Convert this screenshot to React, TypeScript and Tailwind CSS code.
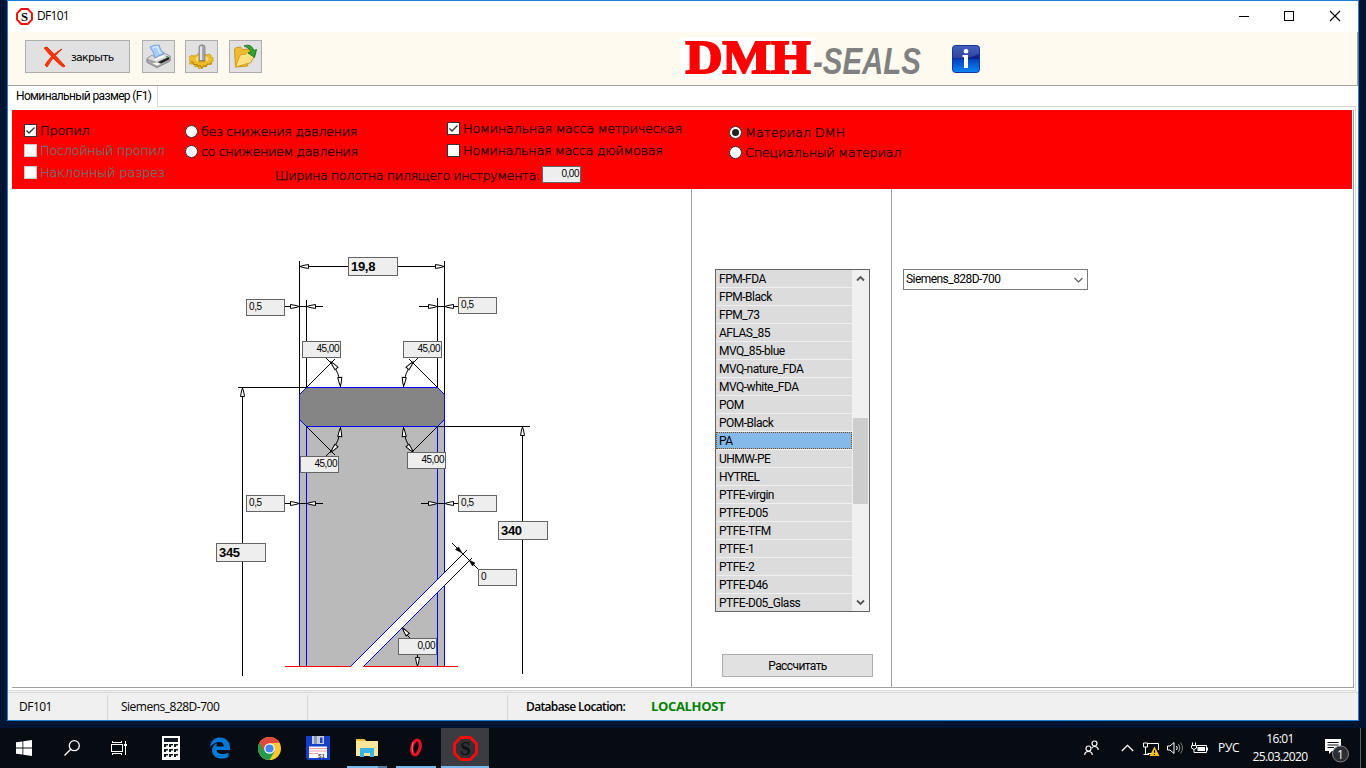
import React from "react";

const MATERIALS = [
  "FPM-FDA", "FPM-Black", "FPM_73", "AFLAS_85", "MVQ_85-blue", "MVQ-nature_FDA", "MVQ-white_FDA",
  "POM", "POM-Black", "PA", "UHMW-PE", "HYTREL", "PTFE-virgin", "PTFE-D05", "PTFE-TFM", "PTFE-1",
  "PTFE-2", "PTFE-D46", "PTFE-D05_Glass",
];

function OctagonS({ size, sFill, inner }: { size: number; sFill: string; inner: string }) {
  return (
    <svg width={size} height={size} viewBox="0 0 24 24">
      <polygon points="7.5,1.5 16.5,1.5 22.5,7.5 22.5,16.5 16.5,22.5 7.5,22.5 1.5,16.5 1.5,7.5" fill={inner} stroke="#f60c0c" strokeWidth="2.8" />
      <text x="12" y="18.2" textAnchor="middle" fontFamily="Liberation Serif, serif" fontWeight="bold" fontSize="18" fill={sFill}>S</text>
    </svg>
  );
}

function TitleBar() {
  return (
    <div className="flex h-[31px] shrink-0 items-center bg-white pl-2">
      <OctagonS size={17} sFill="#000" inner="#fff" />
      <span className="ml-[4px] mt-[-2px] font-['Open_Sans',sans-serif] text-[12px] tracking-[-0.7px] text-black">DF101</span>
      <svg className="ml-auto mr-[17px] -mt-px" width="102" height="12" viewBox="0 0 102 12" fill="none" stroke="#000" shapeRendering="crispEdges">
        <path d="M0 6.5H10" />
        <rect x="45.5" y="1.5" width="9" height="9" />
        <path d="M91 1L101 11M101 1L91 11" shapeRendering="auto" strokeWidth="1.1" />
      </svg>
    </div>
  );
}

function PrinterIcon() {
  return (
    <svg width="25" height="25" viewBox="0 0 25 25">
      <path d="M1 14.500L6 11L9 13L17 10L16 8L24 12V17L11 23.500L1 18Z" fill="#d9d9dc" stroke="#85858a" strokeWidth=".8" />
      <path d="M4 3Q9 .5 13 1Q14 6 18 10Q13 11 9 14Q8 8 4 3Z" fill="#a9cdfa" stroke="#5a92dc" strokeWidth=".8" />
      <path d="M6.500 4Q9 2.500 11.500 2.500Q12 6 14.500 9.500" fill="none" stroke="#dcebff" strokeWidth="1.500" />
      <path d="M1 15L11 19L24 12.500V17L11 23.500L1 18.500Z" fill="#aaaab0" stroke="#77777c" strokeWidth=".6" />
      <path d="M11 18.500L23 13v2.500L12 21Z" fill="#222" />
      <path d="M5 19l6 3 5-2-5-2z" fill="#f5f5f5" stroke="#888" strokeWidth=".5" />
      <path d="M9 16l9-4" stroke="#fff" strokeWidth="1.500" />
      <rect x="20" y="12" width="2" height="1.500" fill="#4ab54a" />
    </svg>
  );
}

function GearIcon() {
  return (
    <svg width="25" height="25" viewBox="0 0 25 25">
      <path d="M2 11.500l4 .5 2-1.500 2-1.500 5 0 2 2 3-1 2 1-.5 2 2.500.5v4l-2.500 1 .5 2-4 0-1 2.500-3-1-1.500 3-2.500 0-1-3-3 1-1.500-3-4 0 1-3-2.500-1v-3l2-.500z" fill="#edbd2c" stroke="#cf9c18" strokeWidth=".8" />
      <path d="M2 17.500l2 1 1 2 3 0 1 2 2-1 2 2.500 2-2.500 2 1 1.500-2.500 3.500 0 .5-1.500" fill="none" stroke="#bb850c" strokeWidth="1.200" />
      <ellipse cx="13" cy="15" rx="6.500" ry="3.500" fill="#fadd70" />
      <ellipse cx="13" cy="17" rx="4" ry="1.500" fill="#cf9c18" />
      <path d="M10 3Q10 .8 13 .8T16 3V16Q13 18 10 16Z" fill="#a5a5aa" stroke="#77777b" strokeWidth=".7" />
      <path d="M12 2.500V16" stroke="#ececf0" strokeWidth="1.800" />
    </svg>
  );
}

function FolderIcon() {
  return (
    <svg width="25" height="25" viewBox="0 0 25 25">
      <path d="M1.500 5l2-1.500 4-.5 2 2.500 7-.5 1 3-3 14L2.500 23Z" fill="#f0bb32" stroke="#c68d10" strokeWidth=".9" />
      <path d="M7 11l6-1 1-1.500 9 0-5 10L2.500 23Z" fill="#fde183" stroke="#d29c1c" strokeWidth=".9" />
      <path d="M11 2Q18-1 21 6.500l2.500-1-2 8-6.500-4.500 3-1Q16 3 11 2Z" fill="#32a436" stroke="#137018" strokeWidth=".8" />
    </svg>
  );
}

const toolBtn = "flex h-[33px] w-[33px] items-center justify-center border border-[#adadad] bg-[#e1e1e1]";

function Toolbar() {
  return (
    <div className="flex h-[54px] shrink-0 items-start border-b border-r border-[#a0a0a0] bg-[#fffaef] pl-[17px]">
      <button className="mt-[8px] flex h-[33px] w-[105px] items-center border border-[#adadad] bg-[#e1e1e1] pl-[17px]">
        <svg width="24" height="24" viewBox="0 0 24 24">
          <path d="M1 3L4 2Q12 10 22 21L20 22Q12 16 1 3Z" fill="#ff3503" stroke="#e92d00" />
          <path d="M19 4Q9 12 4 22L2 20Q8 10 19 4Z" fill="#ff3503" stroke="#e92d00" />
        </svg>
        <span className="ml-[4px] mt-[3px] font-['DejaVu_Sans',sans-serif] text-[11px] tracking-[-0.75px] text-black">закрыть</span>
      </button>
      <button className={`mt-[8px] ml-[12px] ${toolBtn}`}><PrinterIcon /></button>
      <button className={`mt-[8px] ml-[10px] ${toolBtn}`}><GearIcon /></button>
      <button className={`mt-[8px] ml-[11px] ${toolBtn}`}><FolderIcon /></button>
      <svg className="ml-[419px] shrink-0" width="254" height="53" viewBox="681 32 254 53">
        <rect x="681" y="37" width="134" height="42" fill="#fff" />
        <text x="685.500" y="73" fontFamily="Liberation Serif, serif" fontWeight="bold" fontSize="46" textLength="125" lengthAdjust="spacingAndGlyphs" fill="#fe0000" stroke="#fe0000" strokeWidth="2">DMH</text>
        <text x="813" y="74" fontFamily="Liberation Sans, sans-serif" fontWeight="bold" fontStyle="italic" fontSize="36.500" textLength="108" lengthAdjust="spacingAndGlyphs" fill="#808080">-SEALS</text>
      </svg>
      <svg className="ml-[16px] mt-[12px]" width="30" height="30" viewBox="0 0 30 30">
        <defs>
          <linearGradient id="info" x1="0" y1="0" x2="0" y2="1">
            <stop offset="0" stopColor="#2545b4" />
            <stop offset=".5" stopColor="#0a1f8a" />
            <stop offset=".52" stopColor="#0344c0" />
            <stop offset="1" stopColor="#0b86f8" />
          </linearGradient>
        </defs>
        <rect x="1.500" y="1.500" width="27" height="27" rx="3" fill="url(#info)" stroke="#12379b" />
        <path d="M2 5q0-3 3-3h20q3 0 3 3v5Q15 16 2 14z" fill="#fff" opacity=".15" />
        <circle cx="15" cy="7.200" r="2.300" fill="#fff" />
        <path d="M11.500 11H17V24H13V13H11.500Z" fill="#fff" />
      </svg>
    </div>
  );
}

const wide = "whitespace-nowrap font-['DejaVu_Sans',sans-serif] font-extralight text-[13px] leading-[16px]";

function Check({ checked, disabled, label, cls }: { checked?: boolean; disabled?: boolean; label: string; cls: string }) {
  return (
    <div className="flex h-[13px] items-center">
      <svg className="shrink-0" width="13" height="13" viewBox="0 0 13 13">
        <rect x=".5" y=".5" width="12" height="12" fill="#fff" stroke={disabled ? "#ccc" : "#333"} />
        {checked && <path d="M2.500 6.500L5 9L10.500 3.500" fill="none" stroke="#333" strokeWidth="1.300" />}
      </svg>
      <span className={`ml-[3px] ${wide} ${disabled ? "text-[#6d6d6d] [-webkit-text-stroke:0.3px_#6d6d6d]" : "text-black [-webkit-text-stroke:0.25px_#000]"} ${cls}`}>{label}</span>
    </div>
  );
}

function Radio({ checked, label, cls }: { checked?: boolean; label: string; cls: string }) {
  return (
    <div className="flex h-[13px] items-center">
      <svg className="shrink-0" width="13" height="13" viewBox="0 0 13 13">
        <circle cx="6.500" cy="6.500" r="6" fill="#fff" stroke="#333" />
        {checked && <circle cx="6.500" cy="6.500" r="3.500" fill="#222" />}
      </svg>
      <span className={`ml-[3px] ${wide} text-black [-webkit-text-stroke:0.25px_#000] ${cls}`}>{label}</span>
    </div>
  );
}

function OptionsPanel() {
  return (
    <div className="flex h-[79px] w-[1340px] shrink-0 bg-[#ff0000] pl-[12px]">
      <div className="flex w-[161px] flex-col pt-[14px]">
        <Check checked label="Пропил" cls="tracking-[-0.3px]" />
        <div className="h-[7px]" />
        <Check disabled label="Послойный пропил" cls="tracking-[-0.4px]" />
        <div className="h-[9px]" />
        <Check disabled label="Наклонный разрез" cls="tracking-[-0.2px]" />
      </div>
      <div className="flex w-[544px] flex-col">
        <div className="flex h-[56px]">
          <div className="flex w-[262px] flex-col gap-[7px] pt-[15px]">
            <Radio label="без снижения давления" cls="tracking-[-0.45px]" />
            <Radio label="со снижением давления" cls="tracking-[-0.53px]" />
          </div>
          <div className="flex flex-col gap-[9px] pt-[12px]">
            <Check checked label="Номинальная масса метрическая" cls="tracking-[-0.35px]" />
            <Check label="Номинальная масса дюймовая" cls="tracking-[-0.4px]" />
          </div>
        </div>
        <div className="flex h-[17px] items-center pl-[90px]">
          <span className={`mt-[2px] w-[267px] shrink-0 ${wide} tracking-[-0.57px] text-black [-webkit-text-stroke:0.25px_#000]`}>Ширина полотна пилящего инструмента:</span>
          <div className="h-[17px] w-[39px] shrink-0 border border-[#646464] bg-[#eee] pr-[1px] text-right font-['Liberation_Sans',sans-serif] text-[10px] leading-[14px] tracking-[-0.5px] text-black">0,00</div>
        </div>
      </div>
      <div className="flex flex-col gap-[7px] pt-[16px]">
        <Radio checked label="Материал DMH" cls="tracking-[-0.2px]" />
        <Radio label="Специальный материал" cls="tracking-[-0.4px]" />
      </div>
    </div>
  );
}

type Field = { x: number; y: number; v: string; kind: "big" | "left" | "right" };
const FIELDS: Field[] = [
  { x: 348, y: 257, v: "19,8", kind: "big" },
  { x: 246, y: 299, v: "0,5", kind: "left" },
  { x: 458, y: 297, v: "0,5", kind: "left" },
  { x: 302, y: 341, v: "45,00", kind: "right" },
  { x: 403, y: 341, v: "45,00", kind: "right" },
  { x: 300, y: 456, v: "45,00", kind: "right" },
  { x: 407, y: 452, v: "45,00", kind: "right" },
  { x: 246, y: 495, v: "0,5", kind: "left" },
  { x: 458, y: 495, v: "0,5", kind: "left" },
  { x: 498, y: 521, v: "340", kind: "big" },
  { x: 216, y: 543, v: "345", kind: "big" },
  { x: 478, y: 569, v: "0", kind: "left" },
  { x: 398, y: 638, v: "0,00", kind: "right" },
];
const KIND = {
  big: "h-[19px] w-[50px] pl-[2px] text-[13px] leading-[17px] font-bold tracking-[-0.3px]",
  left: "h-[17px] w-[39px] pl-[2px] text-[10px] leading-[14px] tracking-[-0.4px]",
  right: "h-[17px] w-[39px] pr-[1px] text-right text-[10px] leading-[14px] tracking-[-0.5px]",
};

/* Dimension arrow head; the tip sits at (x, y) and the body extends along the given angle. */
function Arrow({ x, y, a }: { x: number; y: number; a: number }) {
  return (
    <g transform={`translate(${x} ${y}) rotate(${a})`}>
      <path d="M0 0L3-1L8.500-2V2L3 1Z" fill="#fff" stroke="#000" strokeWidth="1" />
    </g>
  );
}

function Diagram() {
  return (
    <div className="relative h-[498px] w-[679px] shrink-0 bg-white">
      <svg className="block" width="679" height="498" viewBox="12 189 679 498" fill="none">
        <g shapeRendering="crispEdges">
          <rect x="299" y="419" width="146" height="247" fill="#bababa" />
          <path d="M350.500 666.500L445 572V585L363.500 666.500Z" fill="#fff" />
          <path d="M299.500 394.500L306.500 387.500H437.500L444.500 394.500V419.500L437.500 426.500H306.500L299.500 419.500Z" fill="#858585" stroke="#0000ff" />
          <path d="M299.500 419V666M306.500 427V666M437.500 427V579M444.500 419V572M437.500 592V666M444.500 585V666" stroke="#0000ff" />
          <path d="M350.500 666.500L444.500 572.500M363.500 666.500L444.500 585.500" stroke="#0000ff" />
          <path d="M444.500 572.500L466.500 550.500M444.500 585.500L472 558" stroke="#000" />
          <path d="M285 666.500H351M363 666.500H458" stroke="#ff0000" />
          <path
            stroke="#000"
            d="M299.500 261V394M444.500 261V394M306.500 300V387M437.500 298V387M299 266.500H348M397 266.500H445M285 306.500H323M419 306.500H458M285 503.500H323M421 503.500H458M238 387.500H307M242.500 387V676M437 426.500H530M522.500 426V674M306.500 387.500L335 359M437.500 387.500L409 359M306.500 426.500L335 455M437.500 426.500L411 453M326 358L332 364M418 358L412 364M326 456L332 450M452 543L478 569M409.500 638L403 629M417.500 655V666"
          />
        </g>
        <path d="M331 362Q340 373 340.500 387M413 362Q404 373 403.500 387M331 452Q340 441 340.500 427M413 452Q404 441 403.500 427" stroke="#000" />
        <Arrow x={300} y={266.5} a={0} />
        <Arrow x={444} y={266.5} a={180} />
        <Arrow x={299} y={306.5} a={180} />
        <Arrow x={307} y={306.5} a={0} />
        <Arrow x={437} y={306.5} a={180} />
        <Arrow x={445} y={306.5} a={0} />
        <Arrow x={299} y={503.5} a={180} />
        <Arrow x={307} y={503.5} a={0} />
        <Arrow x={437} y={503.5} a={180} />
        <Arrow x={445} y={503.5} a={0} />
        <Arrow x={242.5} y={388} a={90} />
        <Arrow x={522.5} y={427} a={90} />
        <Arrow x={340.5} y={386} a={-95} />
        <Arrow x={403.5} y={386} a={-85} />
        <Arrow x={340.5} y={428} a={95} />
        <Arrow x={403.5} y={428} a={85} />
        <Arrow x={331} y={362} a={50} />
        <Arrow x={413} y={362} a={130} />
        <Arrow x={331} y={452} a={-50} />
        <Arrow x={413} y={452} a={-130} />
        <Arrow x={402.500} y={628} a={52} />
        <Arrow x={417.500} y={666} a={-90} />
        <path d="M462 553L455.500 549.500L458.500 547ZM469 560L472.500 566L475 563Z" fill="#000" stroke="#000" strokeWidth=".6" />
      </svg>
      {FIELDS.map((f, i) => (
        <div
          key={i}
          className={`absolute border border-[#646464] bg-[#eee] font-['Liberation_Sans',sans-serif] text-black ${KIND[f.kind]}`}
          style={{ left: f.x - 12, top: f.y - 189 }}
        >
          {f.v}
        </div>
      ))}
    </div>
  );
}

function MaterialList() {
  return (
    <div className="flex h-[343px] w-[155px] border border-[#646464] bg-[#f0f0f0]">
      <div className="flex w-[136px] shrink-0 flex-col overflow-hidden font-['Roboto',sans-serif] text-[12px] tracking-[-0.5px] text-black">
        {MATERIALS.map((m) => (
          <div key={m} className={`h-[18px] shrink-0 border-b border-[#f0f0f0] ${m === "PA" ? "bg-[#84b9e9]" : "bg-[#dcdcdc]"}`}>
            <div className={`h-[17px] border pl-[2px] leading-[16px] ${m === "PA" ? "border-dotted border-[#7b4616]" : "border-transparent"}`}>{m}</div>
          </div>
        ))}
      </div>
      <div className="ml-px flex w-[15px] flex-col items-center">
        <svg className="mt-[5px] shrink-0" width="9" height="7" viewBox="0 0 9 7" fill="none" stroke="#555" strokeWidth="1.800"><path d="M1 5.500L4.500 2L8 5.500" /></svg>
        <div className="mt-[136px] h-[86px] w-full shrink-0 bg-[#cdcdcd]" />
        <svg className="mt-[95px] shrink-0" width="9" height="7" viewBox="0 0 9 7" fill="none" stroke="#555" strokeWidth="1.800"><path d="M1 1.500L4.500 5L8 1.500" /></svg>
      </div>
    </div>
  );
}

function MainArea() {
  return (
    <div className="flex h-[498px] shrink-0">
      <Diagram />
      <div className="flex w-[201px] shrink-0 flex-col border-x border-[#a0a0a0] pl-[23px] pt-[80px]">
        <MaterialList />
        <button className="ml-[7px] mt-[42px] h-[23px] w-[151px] border border-[#adadad] bg-[#e1e1e1] font-['Roboto',sans-serif] text-[12px] leading-[22px] tracking-[-0.6px] text-black">Рассчитать</button>
      </div>
      <div className="pl-[11px] pt-[80px]">
        <div className="flex h-[21px] w-[185px] items-center border border-[#7a7a7a] bg-white pl-[2px] pr-[4px] font-['Roboto',sans-serif] text-[12px] leading-[17px] tracking-[-0.55px] text-black">
          Siemens_828D-700
          <svg className="ml-auto" width="9" height="6" viewBox="0 0 9 6" fill="none" stroke="#555" strokeWidth="1.100"><path d="M.5 1L4.500 5L8.500 1" /></svg>
        </div>
      </div>
    </div>
  );
}

function StatusBar() {
  return (
    <div className="flex h-[28px] shrink-0 items-stretch border-t border-[#d7d7d7] bg-[#f0f0f0] pt-[2px] font-['Open_Sans',sans-serif] text-[12px] leading-[23px] tracking-[-0.5px] text-black">
      <div className="h-[25px] w-[100px] border-r border-[#d7d7d7] pl-[11px]">DF101</div>
      <div className="h-[25px] w-[200px] border-r border-[#d7d7d7] pl-[13px]">Siemens_828D-700</div>
      <div className="h-[25px] w-[200px] border-r border-[#d7d7d7]" />
      <div className="w-[125px] shrink-0 whitespace-nowrap pl-[18px] font-semibold tracking-[-0.65px]">Database Location:</div>
      <div className="pl-[18px] text-[13px] font-bold tracking-[-0.35px] text-[#008000]">LOCALHOST</div>
    </div>
  );
}

function Cell({ children, active, line }: { children: React.ReactNode; active?: boolean; line?: "full" | "wide" | "stack" }) {
  return (
    <div className={`flex h-[40px] w-[48px] shrink-0 flex-col ${active ? "bg-[#3a3c41]" : ""}`}>
      <div className="flex h-[38px] items-center justify-center pt-[2px]">{children}</div>
      {line === "full" && <div className="h-[2px] w-[48px] bg-[#76b9ed]" />}
      {line === "wide" && <div className="ml-[4px] h-[2px] w-[40px] bg-[#76b9ed]" />}
      {line === "stack" && (
        <div className="ml-[4px] flex h-[2px]">
          <div className="w-[31px] bg-[#76b9ed]" />
          <div className="w-[9px] bg-[#537fa2]" />
        </div>
      )}
    </div>
  );
}

function Taskbar() {
  return (
    <div className="flex h-[40px] shrink-0 bg-[#070c12]">
      <div className="mr-[3px] flex">
        <Cell>
          <svg width="16" height="16" viewBox="0 0 16 16" fill="#fff"><path d="M0 2.300L6.500 1.400V7.500H0ZM7.300 1.200L16 0V7.500H7.300ZM0 8.400H6.500V14.600L0 13.700ZM7.300 8.400H16V16L7.300 14.800Z" /></svg>
        </Cell>
        <Cell>
          <svg width="16" height="16" viewBox="0 0 16 16" fill="none" stroke="#fff" strokeWidth="1.300"><circle cx="10.300" cy="5.700" r="5" /><path d="M6.700 9.300L.5 15.500" /></svg>
        </Cell>
        <Cell>
          <svg className="-ml-px" width="17" height="16" viewBox="0 0 17 16" fill="none" stroke="#fff" shapeRendering="crispEdges"><path d="M.5 4.500H11.500V11.500H.5Z" /><path d="M1.500 1V2.500H10.500V1M1.500 15V13.500H10.500V15M14.500 1V15" /><path d="M13 4.500H16M13 5.500H16" /></svg>
        </Cell>
      </div>
      <div className="flex gap-px">
        <Cell>
          <svg width="18" height="24" viewBox="0 0 18 24"><path d="M0 0H18V24H0Z" fill="#fff" /><path d="M2 2H16V6H2Z" fill="#111820" /><g fill="#111820">{[8, 13, 18].map((y) => [2, 7, 12].map((x) => <path key={`${x}-${y}`} d={`M${x} ${y}h4v1.500h-2v1.500h-2z`} />))}</g></svg>
        </Cell>
        <Cell>
          <svg width="22" height="22" viewBox="0 0 22 22"><path d="M1 10C2 3 6 .5 11 .5C17 .5 21 5 21 10V13H7.500C8 17 14 18.500 19.500 15.500V20C12 23.500 3 21 3 13.500C3 10 5 7.500 8 6.200C7.500 7.500 7.400 8.500 7.400 9.500H14.800C15 4 7 3 1 10Z" fill="#0078d7" /></svg>
        </Cell>
        <Cell>
          <svg width="23" height="23" viewBox="0 0 24 24"><circle cx="12" cy="12" r="12" fill="#fcc934" /><path d="M12 12L1.600 6A12 12 0 0 0 12 24L17.200 15Z" fill="#249a4d" /><path d="M1.600 6A12 12 0 0 1 22.400 6L12 6.600L6.800 15Z" fill="#e04a3c" /><circle cx="12" cy="12" r="5.500" fill="#fff" /><circle cx="12" cy="12" r="4.300" fill="#4285f4" /></svg>
        </Cell>
        <Cell>
          <svg width="24" height="24" viewBox="0 0 24 24"><path d="M0 0H24V24H2L0 22Z" fill="#173ec8" /><path d="M6 0H18V8H6Z" fill="#c6ccd8" /><path d="M8 0H11V8H8Z" fill="#8b98b8" /><path d="M14 1.500H16.500V7H14Z" fill="#173ec8" /><path d="M3 10.500H21V22H3Z" fill="#fff" /><path d="M3 12.500H21M3 15H21M3 17.500H12" stroke="#f0a0a0" /><text x="12" y="21.500" fontSize="5.500" fontWeight="bold" fontFamily="Liberation Sans, sans-serif" fill="#333">S1</text></svg>
        </Cell>
        <Cell line="stack">
          <svg width="22" height="20" viewBox="0 0 22 20"><path d="M0 1H8L10 3H22V18H0Z" fill="#fde69a" /><path d="M0 1H8L10 3H0Z" fill="#f2c03e" /><path d="M4 19V10H18V19H14V15H8V19Z" fill="#3ab4e8" /></svg>
        </Cell>
        <Cell line="wide">
          <svg width="16" height="22" viewBox="0 0 16 22"><ellipse cx="8" cy="10.500" rx="4" ry="7.500" transform="rotate(14 8 10.500)" fill="none" stroke="#e81224" strokeWidth="3.200" /><path d="M5 5Q3 10 5 16" fill="none" stroke="#ff7584" strokeWidth=".9" /></svg>
        </Cell>
        <Cell active line="full"><OctagonS size={25} sFill="#101010" inner="#303236" /></Cell>
      </div>
      <div className="ml-auto flex w-[282px] items-center font-['Open_Sans',sans-serif] text-[12px] text-white">
        <svg className="shrink-0" width="15" height="16" viewBox="0 0 15 16" fill="none" stroke="#fff" strokeWidth="1.200"><circle cx="10.500" cy="3.500" r="2.500" /><circle cx="4.500" cy="8.500" r="2.500" /><path d="M.7 15Q.7 11.500 4.500 11.500T8.200 15M8 8Q9 6.500 10.500 6.500Q14 6.500 14.300 10" /></svg>
        <svg className="ml-[22px] shrink-0" width="13" height="8" viewBox="0 0 13 8" fill="none" stroke="#fff" strokeWidth="1.300"><path d="M.8 7L6.500 1.300L12.200 7" /></svg>
        <svg className="ml-[9px] mt-[2px] shrink-0" width="17" height="15" viewBox="0 0 17 15" fill="none" stroke="#fff"><path d="M.5 1H4.500V5H.5ZM4.500 1.500H15.500V8M2.500 5V12.500M4.500 11.500H8M.5 12.500H6" /><path d="M11.500 4.500L16.500 14H6.500Z" fill="#fdc01c" stroke="none" /><path d="M11.500 8V11M11.500 12V13" stroke="#222" strokeWidth="1.200" /></svg>
        <svg className="ml-[7px] shrink-0" width="17" height="14" viewBox="0 0 17 14" fill="none" stroke="#fff"><path d="M.5 5H3L7 1.500V12.500L3 9H.5Z" /><path d="M9.500 5Q11 7 9.500 9" /><path d="M11.500 3.200Q14.200 7 11.500 10.800" stroke="#aaa" /><path d="M13.500 1.500Q17.500 7 13.500 12.500" stroke="#777" /></svg>
        <svg className="ml-[7px] shrink-0" width="17" height="13" viewBox="0 0 17 13" fill="none" stroke="#fff"><path d="M6 3.500H15.500V10.500H5" /><path d="M6.500 5H14V9H6.500Z" fill="#fff" stroke="none" /><path d="M16.500 5.500V8.500M1.500 .5V3M4.500 .5V3M.5 3.500H5.500V6L3 7.500L.5 6ZM3 7.500V10.500H5" /></svg>
        <span className="ml-[10px] w-[24px] shrink-0 tracking-[-0.3px]">РУС</span>
        <div className="ml-[6px] w-[64px] shrink-0 whitespace-nowrap text-center leading-[18px] tracking-[-0.6px]">
          <div>16:01</div>
          <div>25.03.2020</div>
        </div>
        <svg className="ml-[12px] mt-[4px] shrink-0" width="26" height="26" viewBox="0 0 26 26"><path d="M1 2H17V14H8L5 17V14H1Z" fill="#fff" /><path d="M3.500 5.500H14.500M3.500 8H14.500M3.500 10.500H10" stroke="#0a0f16" /><circle cx="16.500" cy="17" r="8" fill="#2b2e33" stroke="#81858a" /><text x="16.500" y="21.500" textAnchor="middle" fontFamily="Open Sans, sans-serif" fontSize="12" fill="#fff">1</text></svg>
        <div className="ml-[10px] h-[40px] w-px shrink-0 bg-[#5e6266]" />
      </div>
    </div>
  );
}

export default function App() {
  return (
    <div className="flex h-[768px] w-[1366px] flex-col overflow-hidden bg-[#00142b]">
      <div className="flex h-[728px] shrink-0 flex-col bg-gradient-to-r from-[#001534] to-[#001430] pl-[7px]">
        <div className="flex h-[721px] w-[1352px] flex-col border border-[#1b80d4] bg-white">
          <TitleBar />
          <Toolbar />
          <div className="flex h-[21px] shrink-0">
            <div className="h-[21px] w-[150px] shrink-0 whitespace-nowrap border-r border-[#d9d9d9] pl-[8px] font-['Roboto',sans-serif] text-[12px] leading-[20px] tracking-[-0.65px] text-black">Номинальный размер (F1)</div>
            <div className="h-[21px] w-[1198px] border-b border-[#d9d9d9]" />
          </div>
          <div className="h-[584px] w-[1348px] shrink-0 border-b border-r border-[#d9d9d9] pl-[4px] pt-[3px]">
            <div className="flex h-[578px] w-[1342px] flex-col border-b border-r border-[#a0a0a0]">
              <OptionsPanel />
              <MainArea />
            </div>
          </div>
          <div className="h-px shrink-0 bg-[#f0f0f0]" />
          <StatusBar />
        </div>
      </div>
      <Taskbar />
    </div>
  );
}
